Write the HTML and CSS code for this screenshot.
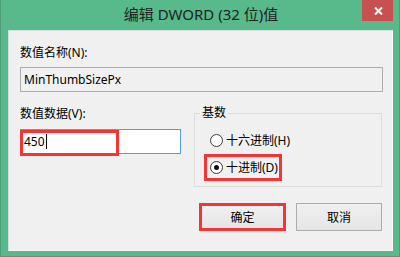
FILE: index.html
```html
<!DOCTYPE html>
<html lang="zh-CN">
<head>
<meta charset="utf-8">
<title>编辑 DWORD (32 位)值</title>
<link rel="stylesheet" href="styles.css">
</head>
<body>
<div class="window">
  <div class="titlebar">
    <span class="spacer"></span>
    <div class="title">编辑 DWORD (32 位)值</div>
    <div class="close-wrap">
      <button class="close" aria-label="关闭">
        <svg width="9" height="8" viewBox="0 0 9 8"><path d="M1 0.5 L8 7.5 M8 0.5 L1 7.5" stroke="#fff" stroke-width="2" fill="none"/></svg>
      </button>
    </div>
  </div>
  <div class="content">
    <div class="label">数值名称(N):</div>
    <div class="textbox readonly">MinThumbSizePx</div>
    <div class="row">
      <div class="col">
        <div class="label label-data">数值数据(V):</div>
        <div class="textbox focus">450<span class="caret"></span><span class="mark"></span></div>
      </div>
      <fieldset class="base">
        <legend>基数</legend>
        <label class="radio"><span class="circle"></span>十六进制(H)</label>
        <label class="radio marked"><span class="circle checked"></span>十进制(D)</label>
      </fieldset>
    </div>
    <div class="buttons">
      <button class="btn marked-btn">确定</button>
      <button class="btn">取消</button>
    </div>
  </div>
</div>
</body>
</html>
```
FILE: styles.css
```css
* { box-sizing: border-box; }
html, body { margin: 0; padding: 0; }
body {
  width: 400px;
  height: 257px;
  overflow: hidden;
  font-family: "Noto Sans", "Noto Sans CJK SC", sans-serif;
  font-size: 12px;
  color: #000;
}
.window {
  width: 400px;
  height: 257px;
  background: #58b98a;
  border-left: 1px solid #4a9f76;
  border-right: 1px solid #4a9f76;
  border-bottom: 1px solid #4a9f76;
  display: flex;
  flex-direction: column;
}
.titlebar {
  height: 30px;
  display: grid;
  grid-template-columns: 1fr auto 1fr;
  align-items: start;
}
.title {
  padding-top: 4px;
  line-height: 20px;
  font-size: 15px;
  color: #222;
  white-space: nowrap;
  padding-left: 2px;
}
.close-wrap {
  display: flex;
  justify-content: flex-end;
  padding-right: 6px;
}
.close {
  width: 31px;
  height: 21px;
  border: 0;
  padding: 0;
  margin: 0;
  background: #c75050;
  display: flex;
  align-items: center;
  justify-content: center;
}
.close svg { display: block; margin-left: 1px; }
.content {
  margin: 0 6px 0 7px;
  height: 221px;
  background: #f0f0f0;
  border: 1px solid #dadada;
  border-right-color: #f8f8f8;
  border-bottom-color: #f8f8f8;
  padding: 14px 9px 0 11px;
}
.label {
  line-height: 16px;
  height: 16px;
}
.textbox {
  margin-top: 6px;
  height: 25px;
  border: 1px solid #adadad;
  padding-left: 3px;
  line-height: 23px;
  background: #f0f0f0;
  position: relative;
  display: flex;
  align-items: center;
}
.row {
  display: flex;
  align-items: flex-start;
  margin-top: 13px;
}
.col { width: 161px; }
.label-data { margin-top: 1px; }
.textbox.focus {
  margin-top: 7px;
  background: #fff;
  border-color: #569de5;
}
.caret {
  display: inline-block;
  width: 1px;
  height: 15px;
  background: #000;
  margin-left: 1px;
}
.mark {
  position: absolute;
  left: -1px;
  top: 0;
  width: 99px;
  height: 26px;
  border: 3px solid #f23535;
}
.base {
  margin: 0 0 0 13px;
  width: 188px;
  min-width: 0;
  border: 1px solid #dcdcdc;
  padding: 6px 0 5px 9px;
}
.base legend {
  padding: 0 2px;
  margin-left: -4px;
  line-height: 16px;
}
.radio {
  display: flex;
  width: max-content;
  align-items: center;
  gap: 3px;
  height: 27px;
  border: 3px solid transparent;
  padding: 0 1px 0 3px;
  line-height: 16px;
}
.radio.marked { border-color: #f23535; }
.circle {
  width: 13px;
  height: 13px;
  border: 1px solid #3c3c3c;
  border-radius: 50%;
  background: #fff;
  display: flex;
  align-items: center;
  justify-content: center;
}
.circle.checked::after {
  content: "";
  width: 5px;
  height: 5px;
  border-radius: 50%;
  background: #111;
}
.buttons {
  display: flex;
  justify-content: flex-end;
  gap: 10px;
  margin-top: 16px;
  padding-right: 1px;
}
.btn {
  width: 86px;
  height: 28px;
  margin: 0;
  padding: 0;
  font: inherit;
  color: #000;
  border: 1px solid #acacac;
  background: linear-gradient(#f0f0f0, #e5e5e5);
}
.btn.marked-btn {
  width: 87px;
  border: 3px solid #f23535;
}
```
